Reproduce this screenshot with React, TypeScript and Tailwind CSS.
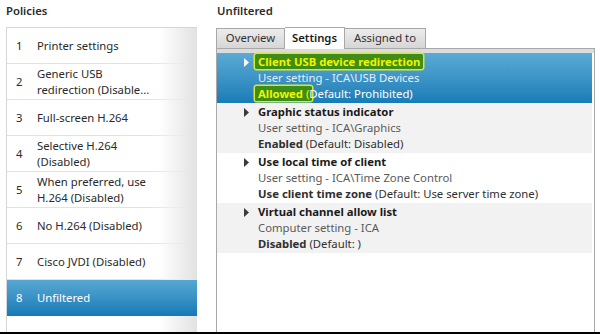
import { type ReactNode } from 'react'

const policies = [
  { n: 1, lines: ['Printer settings'] },
  { n: 2, lines: ['Generic USB', 'redirection (Disable...'] },
  { n: 3, lines: ['Full-screen H.264'] },
  { n: 4, lines: ['Selective H.264', '(Disabled)'] },
  { n: 5, lines: ['When preferred, use', 'H.264 (Disabled)'] },
  { n: 6, lines: ['No H.264 (Disabled)'] },
  { n: 7, lines: ['Cisco JVDI (Disabled)'] },
]

function Arrow({ white }: { white?: boolean }) {
  return (
    <svg width="6" height="9" viewBox="0 0 6 9" className="shrink-0 mt-[4px]">
      <path d="M0 0 L5 4.5 L0 9 Z" fill={white ? '#ffffff' : '#3a3a3a'} />
    </svg>
  )
}

function Mark({ children }: { children: ReactNode }) {
  return (
    <span className="bg-[#3f8d16] text-[#eef500] rounded-[2px] shadow-[0_0_0_1.5px_#dce82a] px-[3px] -mx-[3px]">
      {children}
    </span>
  )
}

function SettingItem({
  title,
  path,
  value,
  rest,
  shaded,
}: {
  title: string
  path: string
  value: string
  rest: string
  shaded?: boolean
}) {
  return (
    <div className={`flex gap-[8px] pl-[27px] py-[1px] h-[50px] ${shaded ? 'bg-[#f2f2f2]' : 'bg-white'}`}>
      <Arrow />
      <div className="leading-[16px]">
        <div className="font-bold text-[#1b1b1b]">{title}</div>
        <div className="text-[#5a5a5a]">{path}</div>
        <div className="text-[#303030]">
          <span className="font-bold">{value}</span> {rest}
        </div>
      </div>
    </div>
  )
}

export default function App() {
  return (
    <div
      className="w-[600px] h-[334px] bg-white flex flex-col overflow-hidden text-[11.3px] text-[#222]"
      style={{ fontFamily: '"Noto Sans", "Segoe UI", sans-serif' }}
    >
      <div className="flex flex-1 min-h-0 pl-[6px] pr-[5px]">
        {/* Policies */}
        <div className="w-[191px] flex flex-col">
          <div className="h-[27px] pt-[3px] leading-[16px] font-semibold text-[#2b2b2b]">Policies</div>
          <div className="flex-1 border-t border-l border-[#d6d6d6] bg-gradient-to-r from-white via-white via-80% to-[#e2e2e2]">
            {policies.map((p) => (
              <div key={p.n} className="h-[36px] flex items-center pl-[9px] relative">
                <span className="w-[21px] text-[#2a2a2a]">{p.n}</span>
                <div className="leading-[16px] text-[#2a2a2a]">
                  {p.lines.map((l) => (
                    <div key={l}>{l}</div>
                  ))}
                </div>
                <div className="absolute left-0 right-0 bottom-0 h-px bg-gradient-to-r from-[#e2e2e2] via-[#e2e2e2] via-75% to-transparent" />
              </div>
            ))}
            <div className="h-[36px] flex items-center pl-[9px] bg-gradient-to-b from-[#56a8d3] to-[#137ab5] text-white">
              <span className="w-[21px]">8</span>
              <span>Unfiltered</span>
            </div>
          </div>
        </div>

        {/* Unfiltered */}
        <div className="ml-[19px] flex-1 flex flex-col">
          <div className="h-[27px] pt-[3px] pl-[1px] leading-[16px] font-semibold text-[#2b2b2b]">Unfiltered</div>
          <div className="flex items-end h-[21px] relative z-10">
            <div className="h-[20px] w-[69px] text-center leading-[18px] border border-b-0 border-[#a8a8a8] bg-gradient-to-b from-[#ececec] to-[#d6d6d6] text-[#333]">
              Overview
            </div>
            <div className="h-[22px] w-[60px] text-center -mb-px leading-[20px] border border-b-0 border-l-0 border-[#a8a8a8] bg-white font-semibold text-[#1b1b1b]">
              Settings
            </div>
            <div className="h-[20px] w-[81px] text-center leading-[18px] border border-b-0 border-l-0 border-[#a8a8a8] bg-gradient-to-b from-[#ececec] to-[#d6d6d6] text-[#333]">
              Assigned to
            </div>
          </div>
          <div className="flex-1 border border-b-0 border-[#a8a8a8] bg-white">
            <div className="border-t-[4px] border-[#dcdcdc] pr-[2px]">
              <div className="flex gap-[8px] pl-[27px] py-[1px] h-[50px] bg-gradient-to-b from-[#5aabd5] to-[#187cb7] text-white">
                <Arrow white />
                <div className="leading-[16px]">
                  <div className="font-bold">
                    <Mark>Client USB device redirection</Mark>
                  </div>
                  <div className="text-[#e3f0f8]">User setting - ICA\USB Devices</div>
                  <div>
                    <Mark>
                      <span className="font-bold">Allowed</span> (
                    </Mark>
                    Default: Prohibited)
                  </div>
                </div>
              </div>
              <SettingItem
                shaded
                title="Graphic status indicator"
                path="User setting - ICA\Graphics"
                value="Enabled"
                rest="(Default: Disabled)"
              />
              <SettingItem
                title="Use local time of client"
                path="User setting - ICA\Time Zone Control"
                value="Use client time zone"
                rest="(Default: Use server time zone)"
              />
              <SettingItem
                shaded
                title="Virtual channel allow list"
                path="Computer setting - ICA"
                value="Disabled"
                rest="(Default: )"
              />
            </div>
          </div>
        </div>
      </div>
      <div className="h-[2px] bg-black" />
    </div>
  )
}
